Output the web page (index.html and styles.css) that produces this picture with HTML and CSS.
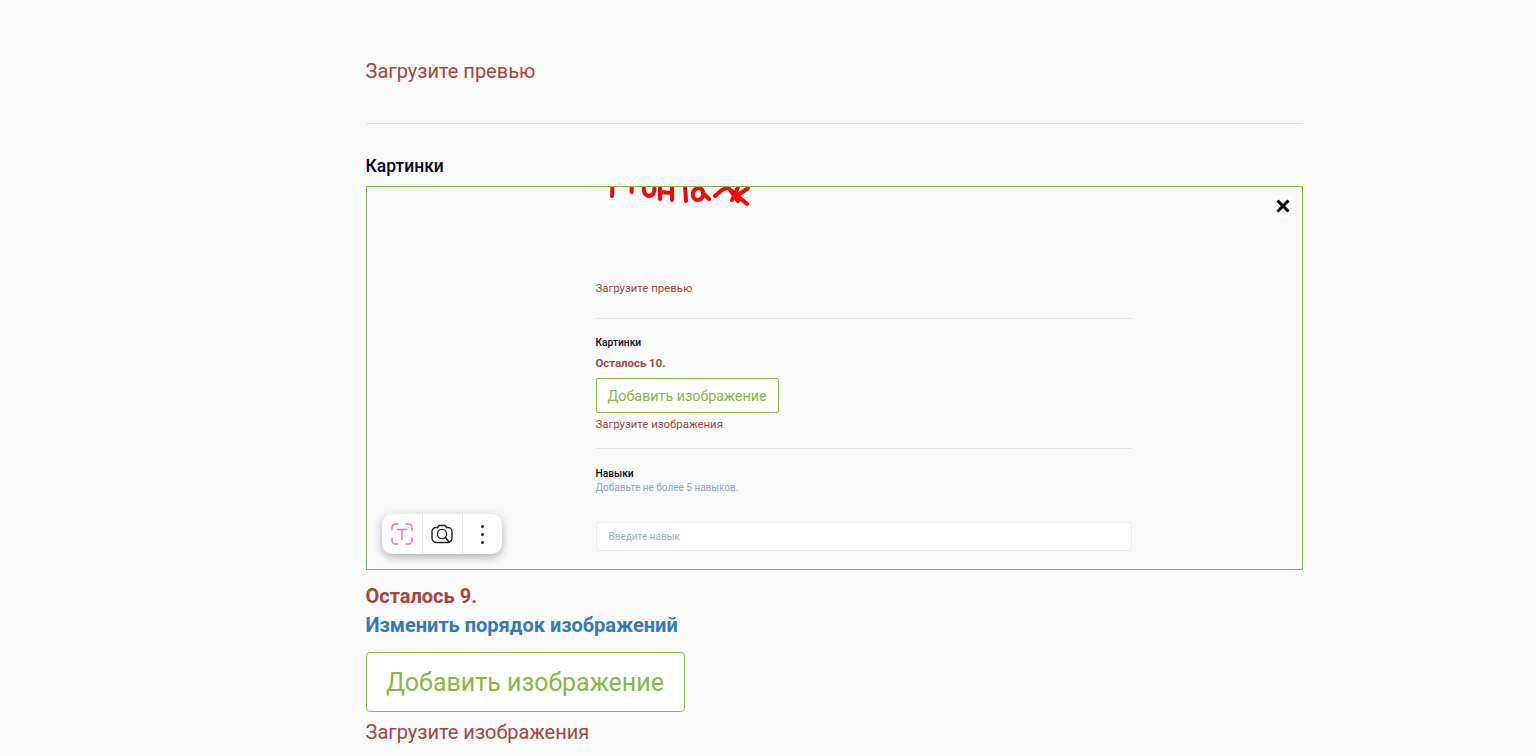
FILE: index.html
```html
<!DOCTYPE html>
<html lang="ru">
<head>
    <meta charset="utf-8">
    <title>Загрузите превью</title>
    <link rel="stylesheet" href="styles.css">
</head>
<body>
    <div class="container">
        <p class="error error-first">Загрузите превью</p>
        <hr class="divider">
        <label class="label">Картинки</label>

        <div class="preview">
            <button class="close-btn" aria-label="Удалить">
                <svg width="16" height="16" viewBox="0 0 16 16"><path d="M2.500 2.500L13.500 13.500M13.500 2.500L2.500 13.500" stroke="#000" stroke-width="3" fill="none"/></svg>
            </button>

            <svg class="scribble" width="142" height="22" viewBox="0 0 142 22">
                <g fill="none" stroke="#f00" stroke-width="4" stroke-linecap="round" stroke-linejoin="round">
                    <path d="M2.500 -2L2 9M22 -2L21.500 5"/>
                    <path d="M34 0C33 6 36 9 39 9C43 9 45 5 44.500 -2"/>
                    <path d="M50 -2L50 12M62 -2L62 13M50 5L62 6"/>
                    <path d="M75 -2L76 14"/>
                    <path d="M88 1C81 3 81 13 88 13C94 12 95 4 90 1M93 6L99 12"/>
                    <path d="M105 9L112 3L118 0L128 14M129 -2L122 13M122 4L137 17M138 1L125 10"/>
                </g>
            </svg>

            <div class="mini">
                <p class="mini-error mini-error-first">Загрузите превью</p>
                <hr class="mini-divider">
                <p class="mini-label">Картинки</p>
                <p class="mini-left">Осталось 10.</p>
                <div class="mini-btn">Добавить изображение</div>
                <p class="mini-error">Загрузите изображения</p>
                <hr class="mini-divider mini-divider-2">
                <p class="mini-label">Навыки</p>
                <p class="mini-hint">Добавьте не более 5 навыков.</p>
                <div class="mini-input">Введите навык</div>
            </div>

            <div class="lens-bar">
                <div class="lens-item">
                    <svg width="22" height="22" viewBox="0 0 22 22" fill="none" stroke="#f272c4" stroke-width="1.500" stroke-linecap="round">
                        <path d="M1 7V4.500A3.500 3.500 0 0 1 4.500 1H7M15 1H17.500A3.500 3.500 0 0 1 21 4.500V7M21 15V17.500A3.500 3.500 0 0 1 17.500 21H15M7 21H4.500A3.500 3.500 0 0 1 1 17.500V15"/>
                        <path d="M6.500 6.500H15.500M11 6.500V16.500"/>
                    </svg>
                </div>
                <div class="lens-item">
                    <svg width="22" height="20" viewBox="0 0 22 20" fill="none" stroke="#222" stroke-width="1.400" stroke-linecap="round" stroke-linejoin="round">
                        <path d="M6.500 3.500L8 1.500H14L15.500 3.500H17A4 4 0 0 1 21 7.500V14A4.500 4.500 0 0 1 16.500 18.500H5.500A4.500 4.500 0 0 1 1 14V7.500A4 4 0 0 1 5 3.500Z"/>
                        <circle cx="11" cy="10" r="4.600"/>
                        <path d="M14.500 13.500L18 18"/>
                    </svg>
                </div>
                <div class="lens-item">
                    <div class="dots"><span></span><span></span><span></span></div>
                </div>
            </div>
        </div>

        <p class="left">Осталось 9.</p>
        <a class="reorder" href="#">Изменить порядок изображений</a>
        <button class="add-btn">Добавить изображение</button>
        <p class="error error-last">Загрузите изображения</p>
    </div>
</body>
</html>
```

FILE: styles.css
```css
* {
    box-sizing: border-box;
}

html, body {
    height: 756px;
    overflow: hidden;
}

body {
    margin: 0;
    background-color: #fafafa;
    font-family: Roboto, "Liberation Sans", sans-serif;
}

p {
    margin: 0;
}

.container {
    width: 937.500px;
    margin-left: 365.500px;
    padding-top: 59px;
    display: flex;
    flex-direction: column;
    align-items: flex-start;
}

.error {
    font-size: 20px;
    line-height: 24px;
    color: #a5443f;
}

.divider {
    width: 100%;
    height: 1px;
    margin: 40px 0 31px;
    border: 0;
    background-color: #e0e0e0;
}

.label {
    font-size: 17.500px;
    line-height: 22px;
    font-weight: 500;
    color: #060626;
}

.preview {
    position: relative;
    width: 100%;
    height: 384px;
    margin-top: 9px;
    border: 1px solid #85b944;
    overflow: hidden;
}

.close-btn {
    position: absolute;
    top: 7px;
    right: 7px;
    width: 24px;
    height: 24px;
    padding: 0;
    display: flex;
    align-items: center;
    justify-content: center;
    border: 0;
    border-radius: 50%;
    background-color: #fff;
}

.scribble {
    position: absolute;
    top: 0;
    left: 243px;
    overflow: visible;
}

.mini {
    width: 536px;
    margin-left: 229px;
    padding-top: 94px;
}

.mini-error {
    font-size: 11.400px;
    line-height: 14px;
    color: #a5443f;
}

.mini-divider {
    height: 1px;
    margin: 23px 0 18px;
    border: 0;
    background-color: #e4e4e4;
}

.mini-divider-2 {
    margin: 17px 0 19px;
}

.mini-label {
    font-size: 10.200px;
    line-height: 12px;
    font-weight: 500;
    color: #060626;
}

.mini-left {
    margin-top: 7px;
    font-size: 11.400px;
    line-height: 14px;
    font-weight: 700;
    color: #a5443f;
}

.mini-btn {
    width: 183px;
    height: 35px;
    margin: 8px 0 4px;
    display: flex;
    align-items: center;
    justify-content: center;
    border: 1px solid #85b944;
    border-radius: 2px;
    background-color: #fff;
    font-size: 14.300px;
    color: #85b944;
}

.mini-hint {
    margin-top: 1px;
    font-size: 10px;
    line-height: 13px;
    color: #8fa4bd;
}

.mini-input {
    height: 29px;
    margin-top: 28px;
    padding-left: 12px;
    display: flex;
    align-items: center;
    border: 1px solid #ececee;
    border-radius: 3px;
    background-color: #fff;
    font-size: 10px;
    color: #9fb0c4;
}

.lens-bar {
    position: absolute;
    left: 15px;
    top: 327px;
    height: 40px;
    display: flex;
    border-radius: 10px;
    background-color: #fff;
    box-shadow: 0 3px 10px rgba(0, 0, 0, 0.3);
}

.lens-item {
    width: 40px;
    display: flex;
    align-items: center;
    justify-content: center;
    border-left: 1px solid #e4e4e4;
}

.lens-item:first-child {
    border-left: 0;
}

.dots {
    display: flex;
    flex-direction: column;
    gap: 5px;
}

.dots span {
    width: 3px;
    height: 3px;
    border-radius: 50%;
    background-color: #222;
}

.left {
    margin-top: 14px;
    font-size: 20px;
    line-height: 24px;
    font-weight: 700;
    color: #a5443f;
}

.reorder {
    margin-top: 5px;
    font-size: 20px;
    line-height: 24px;
    font-weight: 700;
    color: #337ab7;
    text-decoration: none;
}

.add-btn {
    width: 319px;
    height: 60px;
    margin: 15px 0 8px;
    padding: 0;
    border: 1px solid #85b944;
    border-radius: 4px;
    background-color: #fff;
    font-family: inherit;
    font-size: 25px;
    color: #85b944;
}
```
